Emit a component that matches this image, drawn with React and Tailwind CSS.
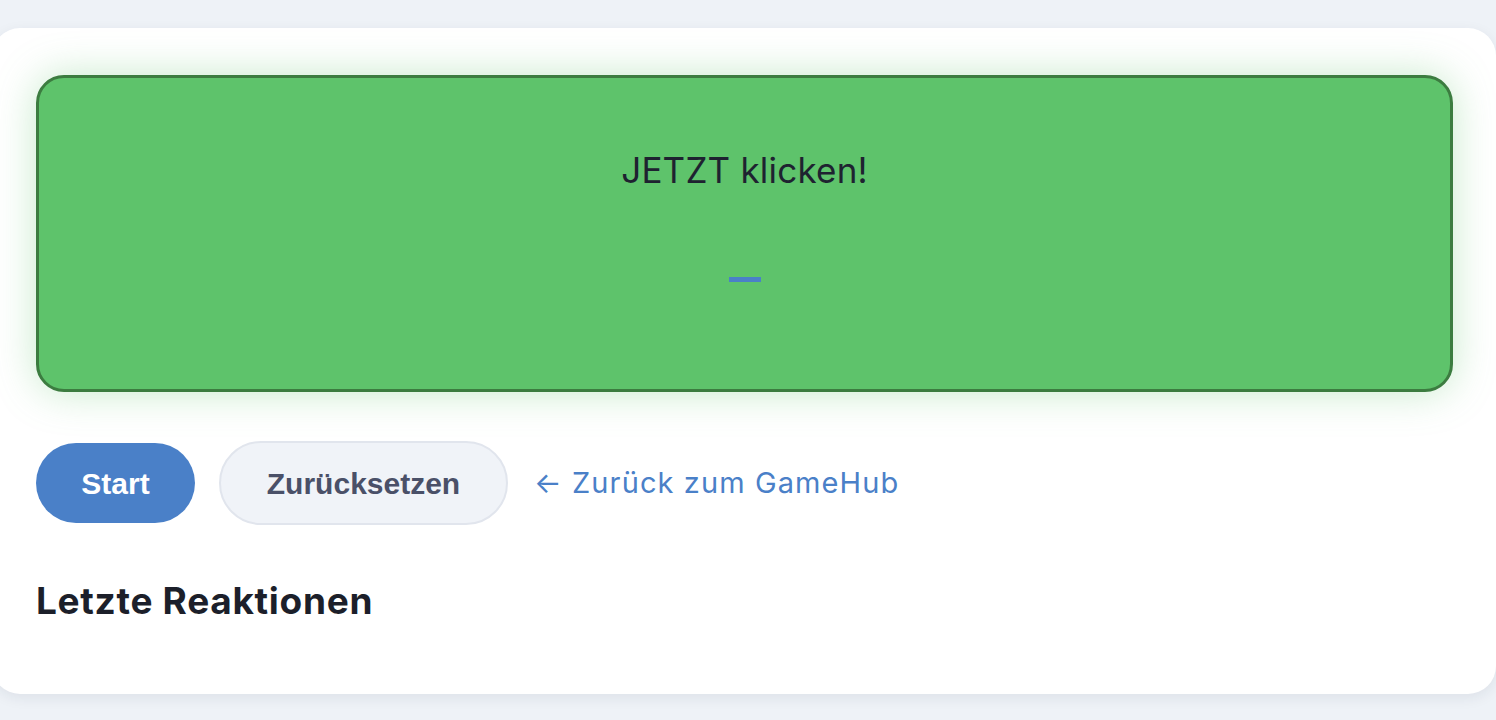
export default function App() {
  return (
    <div className="min-h-[720px] w-full bg-[#eef2f7] pt-[28px] overflow-hidden" style={{ fontFamily: "Inter, 'Noto Sans', sans-serif" }}>
      <div className="-ml-[8px] w-[calc(100%+8px)] bg-white rounded-[28px] pl-[44px] pr-[43px] pt-[47px] pb-[73px] shadow-[0_4px_14px_rgba(30,40,60,0.08)]">
        <div className="h-[317px] rounded-[28px] border-[3px] border-[#3c7c40] bg-[#5ec36b] shadow-[0_0_40px_rgba(94,195,107,0.35)] flex flex-col items-center pt-[72px]">
          <div className="text-[35px] leading-[40px] text-[#1e2230] tracking-[0.2px]">JETZT klicken!</div>
          <div className="mt-[87px] w-[32px] h-[5px] bg-[#4a80c8]"></div>
        </div>
        <div className="flex items-center mt-[49px] h-[84px]">
          <button className="h-[80px] w-[159px] rounded-full bg-[#4a80c8] text-white text-[30px] font-bold" style={{ fontFamily: "'Liberation Sans', Arial, sans-serif" }}>Start</button>
          <button className="ml-[24px] h-[84px] w-[289px] rounded-full bg-[#f0f3f8] border-2 border-[#e1e5ed] text-[#4a5068] text-[30px] font-bold" style={{ fontFamily: "'Liberation Sans', Arial, sans-serif" }}>Zurücksetzen</button>
          <a className="ml-[26px] text-[29px] text-[#4a80c8] tracking-[1.1px]">← Zurück zum GameHub</a>
        </div>
        <h2 className="mt-[56px] text-[37px] leading-[40px] font-bold text-[#1c1f2a] tracking-[0.7px]">Letzte Reaktionen</h2>
      </div>
    </div>
  );
}
